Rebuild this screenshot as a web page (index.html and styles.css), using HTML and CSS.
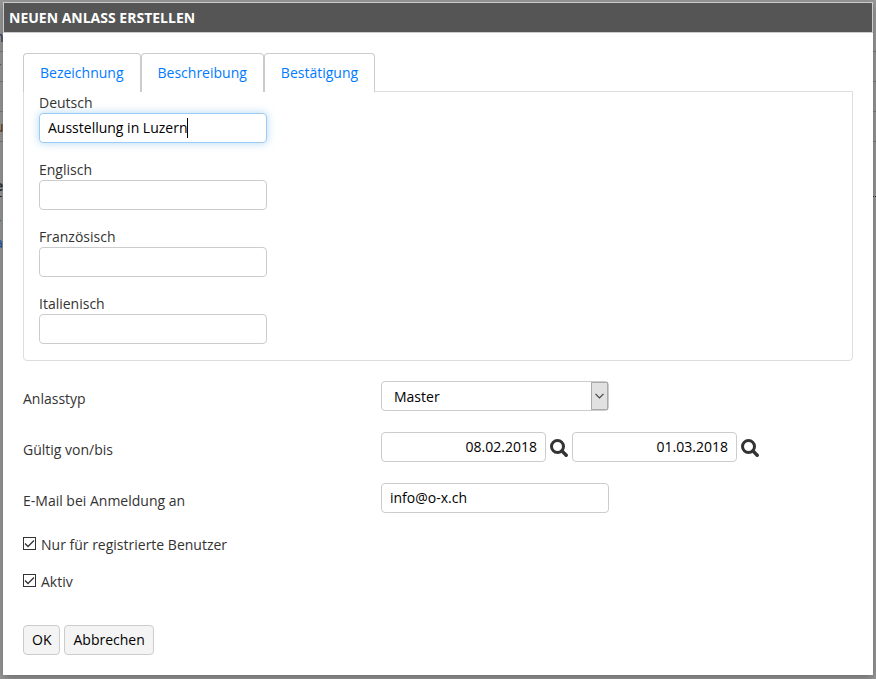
FILE: index.html
```html
<!DOCTYPE html>
<html lang="de">
<head>
  <meta charset="UTF-8" />
  <meta name="viewport" content="width=device-width, initial-scale=1.0"/>
  <title>Neuen Anlass erstellen</title>
  <link rel="stylesheet" href="styles.css">
</head>
<body>
  <!-- Page behind the dialog -->
  <div class="page" aria-hidden="true">
    <div class="page-row navy">n</div>
    <div class="page-row navy">r</div>
    <div class="page-row"></div>
    <div class="page-row brown">u</div>
    <div class="page-title">e</div>
    <div class="page-links">
      <div>r</div>
      <div>a</div>
    </div>
  </div>

  <div class="dialog" role="dialog" aria-labelledby="dialog-title">
    <h1 class="dialog-title" id="dialog-title">NEUEN ANLASS ERSTELLEN</h1>

    <form class="dialog-body">
      <nav class="tabs">
        <a class="tab" href="#bezeichnung">Bezeichnung</a>
        <a class="tab" href="#beschreibung">Beschreibung</a>
        <a class="tab" href="#bestaetigung">Bestätigung</a>
      </nav>

      <div class="panel" id="bezeichnung">
        <div class="field">
          <label for="name-de">Deutsch</label>
          <div class="caret-box">
            <input class="input focused" type="text" id="name-de" value="Ausstellung in Luzern">
            <span class="caret"></span>
          </div>
        </div>
        <div class="field">
          <label for="name-en">Englisch</label>
          <input class="input" type="text" id="name-en">
        </div>
        <div class="field">
          <label for="name-fr">Französisch</label>
          <input class="input" type="text" id="name-fr">
        </div>
        <div class="field">
          <label for="name-it">Italienisch</label>
          <input class="input" type="text" id="name-it">
        </div>
      </div>

      <div class="rows">
        <div class="row">
          <label for="type">Anlasstyp</label>
          <div class="select-box">
            <select class="input select" id="type">
              <option>Master</option>
            </select>
            <span class="select-arrow">
              <svg width="9" height="6" viewBox="0 0 9 6"><path d="M0.5 0.8 L4.5 4.8 L8.5 0.8" fill="none" stroke="#444" stroke-width="1.2"/></svg>
            </span>
          </div>
        </div>
        <div class="row">
          <label for="from">Gültig von/bis</label>
          <div class="dates">
            <input class="input date" type="text" id="from" value="08.02.2018">
            <button class="search" type="button" aria-label="Datum von wählen">
              <svg width="18" height="18" viewBox="0 0 18 18"><circle cx="7.5" cy="7.5" r="6" fill="none" stroke="#333" stroke-width="3"/><path d="M12 12 L16.2 16.2" stroke="#333" stroke-width="3.4" stroke-linecap="round"/></svg>
            </button>
            <input class="input date" type="text" id="to" aria-label="Gültig bis" value="01.03.2018">
            <button class="search" type="button" aria-label="Datum bis wählen">
              <svg width="18" height="18" viewBox="0 0 18 18"><circle cx="7.5" cy="7.5" r="6" fill="none" stroke="#333" stroke-width="3"/><path d="M12 12 L16.2 16.2" stroke="#333" stroke-width="3.4" stroke-linecap="round"/></svg>
            </button>
          </div>
        </div>
        <div class="row">
          <label for="mail">E-Mail bei Anmeldung an</label>
          <input class="input" type="text" id="mail" value="info@o-x.ch">
        </div>
      </div>

      <div class="checks">
        <div class="check">
          <input type="checkbox" id="registered" checked>
          <label for="registered">Nur für registrierte Benutzer</label>
        </div>
        <div class="check">
          <input type="checkbox" id="active" checked>
          <label for="active">Aktiv</label>
        </div>
      </div>

      <div class="buttons">
        <button class="button" type="button">OK</button>
        <button class="button" type="button">Abbrechen</button>
      </div>
    </form>
  </div>
</body>
</html>
```
FILE: styles.css
```css
* {
  box-sizing: border-box;
}

body {
  margin: 0;
  padding: 2px 3px 4px;
  font-family: "Open Sans", sans-serif;
  font-size: 14px;
  line-height: 20px;
  color: #333;
  background-color: #999;
}

/* dimmed page under the dialog */
.page {
  position: absolute;
  top: 22px;
  left: 0;
  right: 0;
  overflow: hidden;
  text-indent: -5px;
}

.page-row {
  height: 30px;
  padding-top: 5px;
  border-bottom: 1px solid #7c7c7c;
}

.navy {
  color: #1c3258;
}

.brown {
  color: #5c3a10;
}

.page-title {
  margin-top: 34px;
  border-bottom: 1px dotted #333;
  font-weight: bold;
}

.page-links {
  padding-top: 16px;
  color: #1550a0;
}

.dialog {
  position: relative;
  background-color: #fff;
  box-shadow: 0 3px 9px rgba(0, 0, 0, 0.3);
}

.dialog-title {
  margin: 0;
  padding: 5px 5px 4px;
  border: 1px solid #ccc;
  font-size: 14px;
  line-height: 20px;
  color: #fff;
  background-color: #555;
}

.dialog-body {
  padding: 20px;
}

.tabs {
  display: flex;
}

.tab {
  height: 39px;
  padding: 9px 16px;
  border: 1px solid #ccc;
  border-bottom: 0;
  border-radius: 4px 4px 0 0;
  color: #007bff;
  background-color: #fff;
  text-decoration: none;
  z-index: 1;
}

.panel {
  display: flex;
  flex-direction: column;
  gap: 17px;
  margin-top: -1px;
  padding: 1px 15px 16px;
  border: 1px solid #ddd;
  border-radius: 0 0 4px 4px;
}

.field label {
  display: block;
}

.input {
  display: block;
  width: 228px;
  height: 30px;
  padding: 0 8px 2px;
  border: 1px solid #ccc;
  border-radius: 4px;
  font: inherit;
  color: #000;
  background-color: #fff;
}

.focused {
  border-color: #9ccbf5;
  box-shadow: 0 0 8px rgba(102, 175, 233, 0.5);
}

.caret-box,
.select-box {
  position: relative;
  width: 228px;
}

.caret {
  position: absolute;
  top: 5px;
  left: 148px;
  width: 1px;
  height: 20px;
  background-color: #000;
}

.rows {
  display: flex;
  flex-direction: column;
  gap: 21px;
  margin-top: 20px;
}

.row {
  display: grid;
  grid-template-columns: 358px 1fr;
}

.row > label {
  padding-top: 8px;
}

.select {
  padding: 2px 12px 0;
  appearance: none;
}

.select-arrow {
  position: absolute;
  top: 1px;
  right: 1px;
  bottom: 1px;
  display: flex;
  align-items: center;
  justify-content: center;
  width: 17px;
  border: 1px solid #aaa;
  background-color: #e1e1e1;
  pointer-events: none;
}

.dates {
  display: flex;
  align-items: center;
  gap: 4px;
}

.date {
  width: 165px;
  text-align: right;
}

.search {
  display: flex;
  padding: 2px 0 0;
  border: 0;
  background: none;
}

.checks {
  display: flex;
  flex-direction: column;
  gap: 17px;
  margin-top: 22px;
}

.check {
  display: flex;
  gap: 5px;
}

.check input {
  appearance: none;
  width: 13px;
  height: 13px;
  margin: 2px 0 0;
  border: 1px solid #333;
  background: #fff url("data:image/svg+xml,%3Csvg xmlns='http://www.w3.org/2000/svg' viewBox='0 0 11 11'%3E%3Cpath d='M1 5.5 L4 8.5 L10 2.5' fill='none' stroke='%23333' stroke-width='1.3'/%3E%3C/svg%3E");
}

.buttons {
  display: flex;
  gap: 4px;
  margin-top: 33px;
}

.button {
  height: 30px;
  padding: 0 8px;
  border: 1px solid #ccc;
  border-radius: 4px;
  font: inherit;
  color: #000;
  background-color: #f4f4f4;
}
```
